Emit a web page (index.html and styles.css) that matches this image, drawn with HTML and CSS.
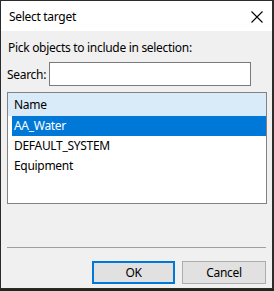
FILE: index.html
```html
<!DOCTYPE html>
<html>
<head>
<meta charset="utf-8">
<link rel="stylesheet" href="styles.css">
</head>
<body>
<div class="window">
  <div class="titlebar">
    <span class="title">Select target</span>
    <svg class="close" width="12" height="12" viewBox="0 0 12 12"><path d="M0.5 0.5 L11.5 11.5 M11.5 0.5 L0.5 11.5" stroke="#000" stroke-width="1.1" fill="none"/></svg>
  </div>
  <div class="content">
    <div class="prompt">Pick objects to include in selection:</div>
    <div class="search-row">
      <span class="search-label">Search:</span>
      <div class="search-input"></div>
    </div>
    <div class="list">
      <div class="list-header">Name</div>
      <div class="row selected">AA_Water</div>
      <div class="row">DEFAULT_SYSTEM</div>
      <div class="row">Equipment</div>
    </div>
    <div class="separator"></div>
    <div class="buttons">
      <div class="btn default">OK</div>
      <div class="btn cancel">Cancel</div>
    </div>
  </div>
</div>
</body>
</html>
```
FILE: styles.css
```css
html, body {
  margin: 0;
  padding: 0;
  background: #1c2a1c;
  width: 274px;
  height: 291px;
  overflow: hidden;
}
.window {
  box-sizing: border-box;
  width: 274px;
  height: 289px;
  border: 1px solid #2b2b2b;
  border-right-width: 2px;
  background: #f0f0f0;
  font-family: "Noto Sans", "Open Sans", sans-serif;
  font-size: 12px;
  letter-spacing: -0.3px;
  color: #000;
  display: flex;
  flex-direction: column;
}
.titlebar {
  height: 30px;
  background: #fff;
  display: flex;
  align-items: center;
  justify-content: space-between;
  padding: 0 8px 0 8px;
  flex: none;
}
.title {
  font-size: 12px;
  margin-top: 1px;
}
.close {
  margin-top: 1px;
  margin-right: 1px;
}
.content {
  flex: 1;
  display: flex;
  flex-direction: column;
  padding: 8px 5px 0 6px;
}
.prompt {
  height: 17px;
  line-height: 17px;
  padding-left: 1px;
}
.search-row {
  display: flex;
  align-items: center;
  margin-top: 6px;
  height: 24px;
}
.search-label {
  width: 42px;
}
.search-input {
  box-sizing: border-box;
  width: 202px;
  height: 24px;
  background: #fff;
  border: 1px solid #7a7a7a;
}
.list {
  box-sizing: border-box;
  margin-top: 6px;
  width: 260px;
  height: 112px;
  border: 1px solid #828282;
  background: #fff;
}
.list-header {
  height: 23px;
  line-height: 23px;
  background: #d9ebf9;
  padding-left: 6px;
}
.row {
  height: 20px;
  line-height: 20px;
  padding-left: 2px;
  margin-left: 4px;
}
.row.selected {
  background: #0078d7;
  color: #fff;
}
.separator {
  margin-top: 43px;
  width: 259px;
  height: 1px;
  background: #a0a0a0;
}
.buttons {
  display: flex;
  justify-content: flex-end;
  gap: 7px;
  margin-top: 13px;
  width: 259px;
}
.btn {
  box-sizing: border-box;
  width: 83px;
  height: 23px;
  line-height: 21px;
  text-align: center;
  background: #e1e1e1;
  border: 1px solid #adadad;
}
.btn.cancel {
  width: 84px;
}
.btn.default {
  border: 2px solid #0078d7;
  line-height: 19px;
}
```
